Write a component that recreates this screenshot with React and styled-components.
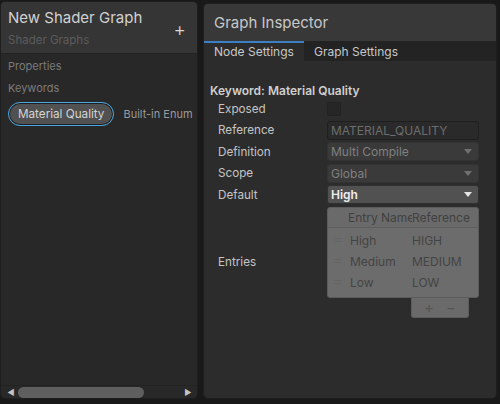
import React from "react";
import styled, { createGlobalStyle } from "styled-components";

const Global = createGlobalStyle`
  html, body {
    margin: 0;
    background: #191919;
    font-family: Inter, "Noto Sans", sans-serif;
  }
  * { box-sizing: border-box; }
`;

const entries = [
  { name: "High", ref: "HIGH" },
  { name: "Medium", ref: "MEDIUM" },
  { name: "Low", ref: "LOW" },
];

const App = () => {
  return (
    <>
      <Global />
      <Page>
        <Blackboard>
          <BoardHead>
            <div>
              <BoardTitle>New Shader Graph</BoardTitle>
              <BoardSub>Shader Graphs</BoardSub>
            </div>
            <AddButton>+</AddButton>
          </BoardHead>
          <BoardBody>
            <Section>Properties</Section>
            <Section>Keywords</Section>
            <KeywordRow>
              <Pill>Material Quality</Pill>
              <PillType>Built-in Enum</PillType>
            </KeywordRow>
          </BoardBody>
          <Scrollbar>
            <Arrow>◀</Arrow>
            <Track>
              <Thumb />
            </Track>
            <Arrow>▶</Arrow>
          </Scrollbar>
        </Blackboard>

        <Inspector>
          <InspectorHead>Graph Inspector</InspectorHead>
          <Tabs>
            <Tab $active>Node Settings</Tab>
            <Tab>Graph Settings</Tab>
          </Tabs>
          <InspectorBody>
            <Heading>Keyword: Material Quality</Heading>
            <Row>
              <Label>Exposed</Label>
              <Checkbox />
            </Row>
            <Row>
              <Label>Reference</Label>
              <TextField>MATERIAL_QUALITY</TextField>
            </Row>
            <Row>
              <Label>Definition</Label>
              <Dropdown>
                Multi Compile
                <Caret />
              </Dropdown>
            </Row>
            <Row>
              <Label>Scope</Label>
              <Dropdown>
                Global
                <Caret />
              </Dropdown>
            </Row>
            <Row>
              <Label>Default</Label>
              <Dropdown $enabled>
                High
                <Caret $enabled />
              </Dropdown>
            </Row>
            <EntriesRow>
              <Label>Entries</Label>
              <EntriesWidget>
                <List>
                  <ListHead>
                    <HeadCell $w={64}>Entry Name</HeadCell>
                    <HeadCell>Reference</HeadCell>
                  </ListHead>
                  <ListRows>
                    {entries.map((e) => (
                      <ListRow key={e.ref}>
                        <Handle />
                        <Cell $w={62}>{e.name}</Cell>
                        <Cell>{e.ref}</Cell>
                      </ListRow>
                    ))}
                  </ListRows>
                </List>
                <Footer>
                  <FooterBtn>+</FooterBtn>
                  <FooterBtn>−</FooterBtn>
                </Footer>
              </EntriesWidget>
            </EntriesRow>
          </InspectorBody>
        </Inspector>
      </Page>
    </>
  );
};

const Page = styled.div`
  display: flex;
  gap: 5px;
  width: 500px;
  height: 404px;
  padding: 1px 3px 5px 0;
`;

const Blackboard = styled.div`
  width: 198px;
  flex-shrink: 0;
  display: flex;
  flex-direction: column;
  background: #282828;
  border: 1px solid #1e1e1e;
  border-radius: 5px;
  overflow: hidden;
`;

const BoardHead = styled.div`
  height: 52px;
  display: flex;
  justify-content: space-between;
  align-items: center;
  padding: 0 11px 0 7px;
  background: #353535;
  border-bottom: 1px solid #232323;
`;

const BoardTitle = styled.div`
  color: #d2d2d2;
  font-size: 15px;
  margin-bottom: 6px;
`;

const BoardSub = styled.div`
  color: #5c5c5c;
  font-size: 11.5px;
`;

const AddButton = styled.div`
  color: #d8d8d8;
  font-size: 19px;
  font-weight: 300;
  margin-top: 3px;
`;

const BoardBody = styled.div`
  flex: 1;
  padding: 1px 0 0 7px;
`;

const Section = styled.div`
  color: #7b7b7b;
  font-size: 11px;
  height: 22px;
  line-height: 22px;
`;

const KeywordRow = styled.div`
  display: flex;
  align-items: center;
  gap: 9px;
  margin-top: 3px;
`;

const Pill = styled.div`
  flex-shrink: 0;
  white-space: nowrap;
  height: 24px;
  padding: 0 9px;
  border-radius: 12px;
  border: 1px solid #47a6e0;
  box-shadow: inset 0 0 0 1px #1f1f1f;
  background: #515151;
  color: #d4d4d4;
  font-size: 11.7px;
  line-height: 22px;
`;

const PillType = styled.div`
  color: #9a9a9a;
  font-size: 11px;
  white-space: nowrap;
`;

const Scrollbar = styled.div`
  height: 13px;
  display: flex;
  align-items: center;
  gap: 2px;
  padding: 0 4px 0 5px;
  border-top: 1px solid #232323;
`;

const Arrow = styled.div`
  color: #c4c4c4;
  font-size: 8px;
  width: 10px;
  text-align: center;
`;

const Track = styled.div`
  flex: 1;
  height: 11px;
`;

const Thumb = styled.div`
  width: 126px;
  height: 11px;
  border-radius: 6px;
  background: #5f5f5f;
`;

const Inspector = styled.div`
  flex: 1;
  margin-top: 2px;
  display: flex;
  flex-direction: column;
  background: #2c2c2c;
  border: 1px solid #1e1e1e;
  border-radius: 5px;
  overflow: hidden;
`;

const InspectorHead = styled.div`
  height: 37px;
  background: #383838;
  color: #c8c8c8;
  font-size: 15px;
  line-height: 37px;
  padding-left: 10px;
`;

const Tabs = styled.div`
  display: flex;
  height: 20px;
  background: #232323;
`;

const Tab = styled.div`
  width: ${({ $active }) => ($active ? "100px" : "auto")};
  padding-left: 10px;
  font-size: 12px;
  line-height: 18px;
  color: #c8c8c8;
  background: ${({ $active }) => ($active ? "#2c2c2c" : "transparent")};
  border-top: 2px solid ${({ $active }) => ($active ? "#3c7fc4" : "transparent")};
`;

const InspectorBody = styled.div`
  flex: 1;
  padding: 23px 17px 0 6px;
`;

const Heading = styled.div`
  color: #cfcfcf;
  font-size: 12px;
  font-weight: 600;
  height: 14px;
  line-height: 14px;
`;

const Row = styled.div`
  display: flex;
  align-items: center;
  height: 21.5px;
  padding-left: 8px;
`;

const Label = styled.div`
  width: 109px;
  flex-shrink: 0;
  color: #c4c4c4;
  font-size: 11.7px;
`;

const Checkbox = styled.div`
  width: 14px;
  height: 14px;
  border-radius: 2px;
  background: #262626;
  border: 1px solid #222;
`;

const TextField = styled.div`
  flex: 1;
  height: 19px;
  border: 1px solid #1f1f1f;
  border-radius: 3px;
  background: #2a2a2a;
  color: #6d6d6d;
  font-size: 12px;
  line-height: 17px;
  padding-left: 3px;
`;

const Dropdown = styled.div`
  flex: 1;
  height: 19px;
  display: flex;
  align-items: center;
  justify-content: space-between;
  padding: 0 6px 0 3px;
  border-radius: 3px;
  background: ${({ $enabled }) => ($enabled ? "#515151" : "#3a3a3a")};
  border: 1px solid ${({ $enabled }) => ($enabled ? "#303030" : "#333")};
  color: ${({ $enabled }) => ($enabled ? "#eeeeee" : "#808080")};
  font-size: 12px;
  font-weight: ${({ $enabled }) => ($enabled ? 600 : 400)};
`;

const Caret = styled.span`
  width: 0;
  height: 0;
  border-left: 4px solid transparent;
  border-right: 4px solid transparent;
  border-top: 5px solid ${({ $enabled }) => ($enabled ? "#e4e4e4" : "#707070")};
`;

const EntriesRow = styled.div`
  display: flex;
  align-items: center;
  padding-left: 8px;
  margin-top: 1px;
`;

const EntriesWidget = styled.div`
  flex: 1;
  display: flex;
  flex-direction: column;
  align-items: flex-end;
`;

const List = styled.div`
  width: 100%;
  border: 1px solid #5c5c5c;
  border-radius: 3px;
  background: #6c6c6c;
  overflow: hidden;
`;

const ListHead = styled.div`
  height: 20px;
  display: flex;
  align-items: center;
  padding-left: 20px;
  background: #6a6a6a;
  border-bottom: 1px solid #5e5e5e;
  color: #414141;
  font-size: 12px;
`;

const HeadCell = styled.div`
  width: ${({ $w }) => ($w ? `${$w}px` : "auto")};
  flex-shrink: 0;
  white-space: nowrap;
  overflow: hidden;
`;

const ListRows = styled.div`
  padding: 2px 0 4px;
`;

const ListRow = styled.div`
  height: 21px;
  display: flex;
  align-items: center;
  padding-left: 6px;
  color: #444444;
  font-size: 12px;
`;

const Handle = styled.div`
  width: 8px;
  height: 4px;
  border-top: 1px solid #656565;
  border-bottom: 1px solid #656565;
  margin-right: 8px;
`;

const Cell = styled.div`
  width: ${({ $w }) => ($w ? `${$w}px` : "auto")};
`;

const Footer = styled.div`
  width: 58px;
  height: 20px;
  margin-right: 10px;
  display: flex;
  align-items: center;
  justify-content: space-evenly;
  background: #6a6a6a;
  border: 1px solid #5c5c5c;
  border-top: none;
  border-radius: 0 0 3px 3px;
`;

const FooterBtn = styled.div`
  color: #555555;
  font-size: 15px;
  line-height: 15px;
`;

export default App;
